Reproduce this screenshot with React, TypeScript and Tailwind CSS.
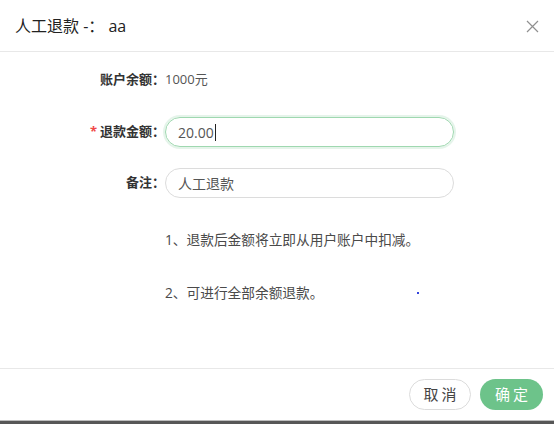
export default function App() {
    return (
        <div className="relative flex h-[424px] w-[554px] flex-col bg-white font-['Open_Sans','Noto_Sans_CJK_SC',sans-serif] text-[#333]">
            {/* Header */}
            <div className="flex h-[52px] shrink-0 items-center justify-between border-b border-[#e8e8e8] pl-[15px] pr-[15px]">
                <span className="text-[16px] leading-none text-[#222]">人工退款 -：&nbsp;aa</span>
                <svg width="13" height="13" viewBox="0 0 13 13" className="mt-[1px]">
                    <path d="M1 1 L12 12 M12 1 L1 12" stroke="#909090" strokeWidth="1.2" />
                </svg>
            </div>

            {/* Body */}
            <div className="flex flex-1 flex-col pt-[13px]">
                <div className="flex h-[30px] items-center text-[13px]">
                    <span className="w-[165px] text-right font-bold text-[#333]">账户余额：</span>
                    <span className="text-[#555]">1000元</span>
                </div>

                <div className="mt-[22px] flex h-[30px] items-center text-[13px]">
                    <span className="w-[165px] text-right font-bold text-[#333]">
                        <span className="mr-[3px] text-[#f04848]">*</span>退款金额：
                    </span>
                    <div className="flex h-[30px] w-[289px] items-center rounded-full border border-[#9fd8b0] px-[12px] text-[14px] text-[#555] shadow-[0_0_0_2px_rgba(109,195,138,0.18)]">
                        20.00
                        <span className="ml-[1px] inline-block h-[17px] w-[1px] bg-[#222]" />
                    </div>
                </div>

                <div className="mt-[21px] flex h-[30px] items-center text-[13px]">
                    <span className="w-[165px] text-right font-bold text-[#333]">备注：</span>
                    <div className="flex h-[30px] w-[289px] items-center rounded-full border border-[#dcdcdc] px-[12px] text-[14px] text-[#555]">
                        人工退款
                    </div>
                </div>

                <div className="mt-[32px] flex h-[20px] items-center pl-[165px] text-[13.7px] text-[#4a4a4a]">
                    1、退款后金额将立即从用户账户中扣减。
                </div>
                <div className="mt-[33px] flex h-[20px] items-center pl-[165px] text-[13.7px] text-[#4a4a4a]">
                    2、可进行全部余额退款。
                    <span className="ml-[94px] inline-block h-[2px] w-[2px] bg-[#3344dd]" />
                </div>
            </div>

            {/* Footer */}
            <div className="flex h-[52px] shrink-0 items-center justify-end gap-[9px] border-t border-[#e8e8e8] pr-[11px]">
                <button className="flex h-[31px] w-[62px] items-center justify-center rounded-full border border-[#dcdcdc] bg-white pl-[3px] text-[15px] tracking-[3px] text-[#444]">
                    取消
                </button>
                <button className="flex h-[31px] w-[63px] items-center justify-center rounded-full bg-[#6dc38a] pl-[3px] text-[15px] tracking-[3px] text-white">
                    确定
                </button>
            </div>
            <div className="h-[1px] shrink-0 bg-[#bdbdbd]" />
            <div className="h-[3px] shrink-0 bg-[#575757]" />
        </div>
    );
}
